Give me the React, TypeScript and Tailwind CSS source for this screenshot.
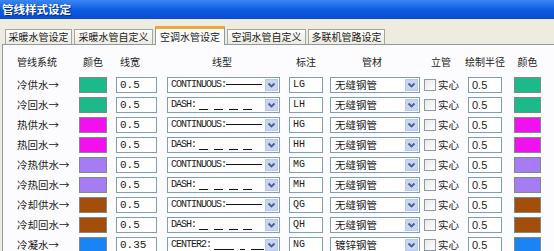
import * as React from "react";

type LineType = "CONTINUOUS" | "DASH" | "CENTER2";

type PipeRow = {
  name: string;
  color: string;
  width: string;
  lineType: LineType;
  tag: string;
  material: string;
};

const rows: PipeRow[] = [
  { name: "冷供水→", color: "#1cb98b", width: "0.5", lineType: "CONTINUOUS", tag: "LG", material: "无缝钢管" },
  { name: "冷回水→", color: "#1cb98b", width: "0.5", lineType: "DASH", tag: "LH", material: "无缝钢管" },
  { name: "热供水→", color: "#f011ee", width: "0.5", lineType: "CONTINUOUS", tag: "HG", material: "无缝钢管" },
  { name: "热回水→", color: "#f011ee", width: "0.5", lineType: "DASH", tag: "HH", material: "无缝钢管" },
  { name: "冷热供水→", color: "#a57cf2", width: "0.5", lineType: "CONTINUOUS", tag: "MG", material: "无缝钢管" },
  { name: "冷热回水→", color: "#a57cf2", width: "0.5", lineType: "DASH", tag: "MH", material: "无缝钢管" },
  { name: "冷却供水→", color: "#a34e0b", width: "0.5", lineType: "CONTINUOUS", tag: "QG", material: "无缝钢管" },
  { name: "冷却回水→", color: "#a34e0b", width: "0.5", lineType: "DASH", tag: "QH", material: "无缝钢管" },
  { name: "冷凝水→", color: "#1a84f4", width: "0.35", lineType: "CENTER2", tag: "NG", material: "镀锌钢管" },
];

const tabs = [
  { label: "采暖水管设定", w: "w-[67px]" },
  { label: "采暖水管自定义", w: "w-[79px]" },
  { label: "空调水管设定", w: "w-[70px]", active: true },
  { label: "空调水管自定义", w: "w-[79px]" },
  { label: "多联机管路设定", w: "w-[77px]" },
];

function DropButton() {
  return (
    <div className="flex h-full w-[13px] shrink-0 items-center justify-center border border-[#b7c8ef] bg-[#c8d6f3]">
      <svg width="9" height="7" viewBox="0 0 9 7">
        <polyline points="1.5,1.5 4.5,4.5 7.5,1.5" fill="none" stroke="#4a5f8c" strokeWidth="1.8" />
      </svg>
    </div>
  );
}

function LineSample({ type }: { type: LineType }) {
  if (type === "CONTINUOUS") {
    return (
      <svg width="36" height="14" className="shrink-0">
        <line x1="0" y1="6.5" x2="36" y2="6.5" stroke="#111" strokeWidth="1" />
      </svg>
    );
  }
  if (type === "DASH") {
    return (
      <svg width="56" height="14" className="ml-[3px] shrink-0">
        {[0, 15, 30, 44].map((x) => (
          <line key={x} x1={x} y1="11.5" x2={x + 9} y2="11.5" stroke="#111" strokeWidth="1" />
        ))}
      </svg>
    );
  }
  return (
    <svg width="56" height="14" className="ml-[3px] shrink-0">
      <line x1="0" y1="11.5" x2="20" y2="11.5" stroke="#111" strokeWidth="1" />
      <line x1="26" y1="11.5" x2="31" y2="11.5" stroke="#111" strokeWidth="1" />
      <line x1="37" y1="11.5" x2="50" y2="11.5" stroke="#111" strokeWidth="1" />
      <line x1="54" y1="11.5" x2="56" y2="11.5" stroke="#111" strokeWidth="1" />
    </svg>
  );
}

function Swatch({ color }: { color: string }) {
  return (
    <div
      className="h-[16px] w-[28px] border border-[#7d8a86]"
      style={{ backgroundColor: color }}
    />
  );
}

export default function App() {
  const mono = "font-['Liberation_Mono',monospace]";
  return (
    <div className="h-[251px] w-[554px] overflow-hidden bg-[#eeecdf] font-['Noto_Sans_CJK_SC',sans-serif] text-[#1a1a1a]">
      {/* title bar */}
      <div className="flex h-[19px] items-center bg-gradient-to-b from-[#3a86f4] via-[#0b5de2] to-[#0a4cd0] pl-[2px] text-[11.5px] font-bold leading-none text-white [text-shadow:1px_1px_0_#0a2a80]">
        管线样式设定
      </div>

      {/* tabs */}
      <div className="flex h-[25px] items-end gap-[2px] pl-[5px]">
        {tabs.map((t) =>
          t.active ? (
            <div
              key={t.label}
              className={`${t.w} relative -mb-px flex h-[19px] items-center justify-center border-x border-t-[3px] border-x-[#919b9c] border-t-[#f0a73a] bg-[#fcfcfe] pb-[1px] text-[10px] leading-none`}
            >
              {t.label}
            </div>
          ) : (
            <div
              key={t.label}
              className={`${t.w} flex h-[15px] items-center justify-center border-x border-t border-[#a0a7a8] bg-gradient-to-b from-[#fdfdfb] to-[#eceae2] text-[10px] leading-none`}
            >
              {t.label}
            </div>
          )
        )}
      </div>

      {/* panel */}
      <div className="ml-[2px] h-full border-l border-t border-[#919b9c] bg-[#fcfcfe] pl-[14px] pt-[7px]">
        {/* header */}
        <div className="flex h-[20px] items-center text-[10px] leading-none text-[#222]">
          <div className="w-[62px]">管线系统</div>
          <div className="w-[37px]">
            <div className="w-[28px] text-center">颜色</div>
          </div>
          <div className="w-[51px] pl-[4px]">线宽</div>
          <div className="w-[122px]">
            <div className="w-[110px] text-center">线型</div>
          </div>
          <div className="w-[41px]">
            <div className="w-[34px] text-center">标注</div>
          </div>
          <div className="w-[94px]">
            <div className="w-[84px] text-center">管材</div>
          </div>
          <div className="w-[44px]">
            <div className="w-[34px] text-center">立管</div>
          </div>
          <div className="w-[46px]">
            <div className="flex w-[34px] justify-center whitespace-nowrap">绘制半径</div>
          </div>
          <div className="w-[27px] text-center">颜色</div>
        </div>

        {/* rows */}
        <div className="mt-[5px] flex flex-col gap-[4px]">
          {rows.map((r) => (
            <div key={r.tag} className="flex h-[16px] items-center">
              <div className="w-[62px] whitespace-nowrap text-[10.5px] leading-none">{r.name}</div>
              <div className="w-[37px]">
                <Swatch color={r.color} />
              </div>
              <div className="w-[51px]">
                <div className={`flex h-[16px] w-[41px] items-center border border-[#7f9db9] bg-white pl-[3px] text-[11px] leading-none ${mono}`}>
                  {r.width}
                </div>
              </div>
              <div className="w-[122px]">
                <div className="flex h-[16px] w-[113px] items-center overflow-hidden border border-[#7f9db9] bg-white p-px">
                  <span className={`pl-[2px] text-[10px] leading-none tracking-[-1px] ${mono}`}>
                    {r.lineType}:
                  </span>
                  <div className="flex min-w-0 flex-1 items-center">
                    <LineSample type={r.lineType} />
                  </div>
                  <DropButton />
                </div>
              </div>
              <div className="w-[41px]">
                <div className={`flex h-[16px] w-[34px] items-center border border-[#7f9db9] bg-white pl-[3px] text-[10px] leading-none ${mono}`}>
                  {r.tag}
                </div>
              </div>
              <div className="w-[94px]">
                <div className="flex h-[16px] w-[90px] items-center border border-[#7f9db9] bg-white p-px">
                  <span className="flex-1 pl-[3px] text-[10.5px] leading-none">{r.material}</span>
                  <DropButton />
                </div>
              </div>
              <div className="flex w-[44px] items-center gap-[2px]">
                <div className="h-[12px] w-[12px] border border-[#8c9aab] bg-gradient-to-br from-[#e9e9e4] to-white" />
                <span className="text-[10.5px] leading-none">实心</span>
              </div>
              <div className="w-[46px]">
                <div className="flex h-[16px] w-[34px] items-center border border-[#7f9db9] bg-white pl-[3px] font-['Liberation_Sans',sans-serif] text-[11px] leading-none">
                  0.5
                </div>
              </div>
              <div className="w-[27px]">
                <div
                  className="h-[16px] w-[27px] border border-[#7d8a86]"
                  style={{ backgroundColor: r.color }}
                />
              </div>
            </div>
          ))}
        </div>
      </div>
    </div>
  );
}
